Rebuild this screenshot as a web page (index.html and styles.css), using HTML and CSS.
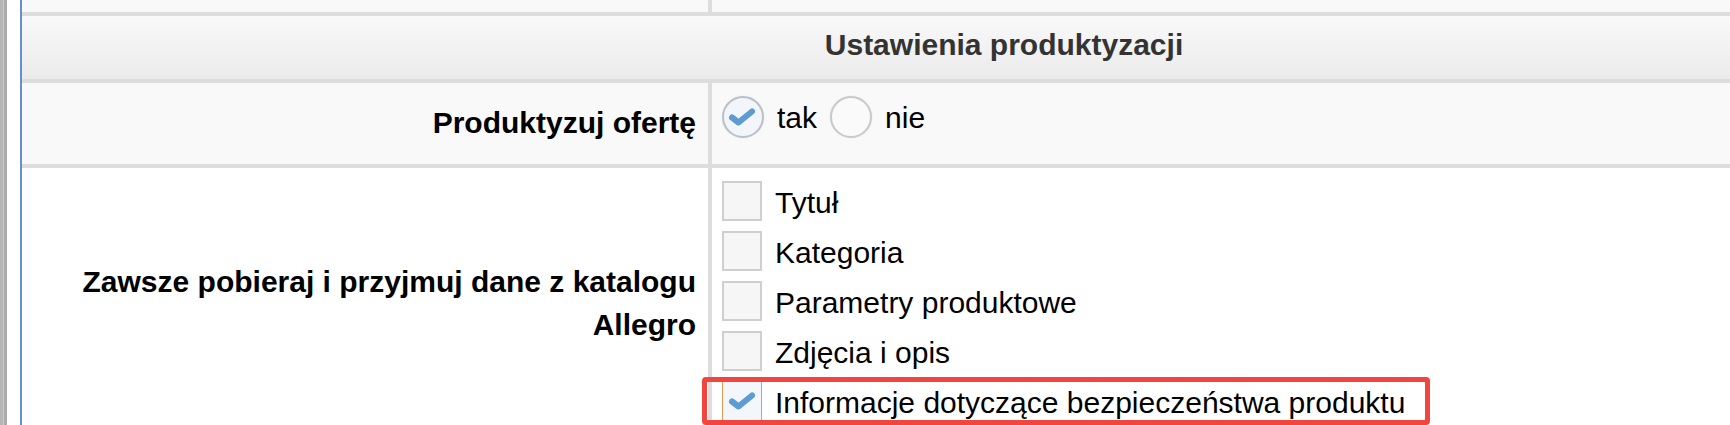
FILE: index.html
```html
<!DOCTYPE html>
<html lang="pl">
<head>
  <meta charset="UTF-8">
  <title>Ustawienia produktyzacji</title>
  <link rel="stylesheet" href="styles.css">
</head>
<body>
  <div class="page">
    <div class="scroll-strip"></div>
    <div class="frame">
      <div class="settings">
        <!-- poprzedni wiersz (ucięty) -->
        <div class="cell label prev"></div>
        <div class="cell field prev"></div>

        <div class="cell section-head">Ustawienia produktyzacji</div>

        <div class="cell label alt">Produktyzuj ofertę</div>
        <div class="cell field alt">
          <div class="radios">
            <label class="radio-opt">
              <span class="radio checked">
                <svg width="28" height="18" viewBox="0 0 28 18"><polyline points="4,9.5 10.5,14.5 24,3.5" fill="none" stroke="#5d9cd3" stroke-width="6" stroke-linecap="round" stroke-linejoin="round"/></svg>
              </span>
              <span class="opt-text">tak</span>
            </label>
            <label class="radio-opt">
              <span class="radio"></span>
              <span class="opt-text">nie</span>
            </label>
          </div>
        </div>

        <div class="cell label">Zawsze pobieraj i przyjmuj dane z katalogu Allegro</div>
        <div class="cell field list">
          <label class="option"><span class="box"></span><span class="opt-text">Tytuł</span></label>
          <label class="option"><span class="box"></span><span class="opt-text">Kategoria</span></label>
          <label class="option"><span class="box"></span><span class="opt-text">Parametry produktowe</span></label>
          <label class="option"><span class="box"></span><span class="opt-text">Zdjęcia i opis</span></label>
          <label class="option marked">
            <span class="box checked">
              <svg width="28" height="18" viewBox="0 0 28 18"><polyline points="4,9.5 10.5,14.5 24,3.5" fill="none" stroke="#5d9cd3" stroke-width="6" stroke-linecap="round" stroke-linejoin="round"/></svg>
            </span>
            <span class="opt-text">Informacje dotyczące bezpieczeństwa produktu</span>
          </label>
        </div>
      </div>
    </div>
  </div>
</body>
</html>
```

FILE: styles.css
```css
html, body {
  margin: 0;
  padding: 0;
  background: #ffffff;
  overflow: hidden;
}
body {
  font-family: "Liberation Sans", Arial, sans-serif;
  font-size: 30px;
  line-height: 1.428571;
  color: #000;
}
.page {
  display: flex;
  height: 425px;
  overflow: hidden;
}
.scroll-strip {
  width: 7px;
  flex: none;
  background: linear-gradient(to right, #b6b6b6 0 3px, #cacaca 3px 4px, #a9a9a9 4px 7px);
}
.frame {
  margin-left: 13px;
  border-left: 2px solid #6190d4;
  flex: 1;
  min-width: 0;
  overflow: hidden;
}
.settings {
  width: 1964px;
  display: grid;
  grid-template-columns: 690px 1fr;
}
.cell {
  box-sizing: border-box;
  border-bottom: 4px solid #dddddd;
  background: #ffffff;
}
.cell.prev {
  height: 16px;
  background: #f9f9f9;
}
.label {
  border-right: 4px solid #dddddd;
  padding: 0 12px 0 15px;
  font-weight: bold;
  text-align: right;
  display: flex;
  align-items: center;
  justify-content: flex-end;
}
.section-head {
  grid-column: 1 / -1;
  height: 67px;
  padding-bottom: 4px;
  background: linear-gradient(#f9f9f9, #ebebeb);
  color: #333;
  font-weight: bold;
  display: flex;
  align-items: center;
  justify-content: center;
}
.alt {
  background: #f9f9f9;
  height: 85px;
}
.field {
  padding-left: 10px;
}
.field.alt {
  padding-top: 13px;
}
.radios {
  display: flex;
  align-items: center;
  gap: 13px;
}
.radio-opt {
  display: flex;
  align-items: center;
  gap: 13px;
  height: 42px;
}
.radio {
  width: 42px;
  height: 42px;
  box-sizing: border-box;
  border: 2px solid #c9c9c9;
  border-radius: 50%;
  background: #fafafa;
  box-shadow: 0 0 2px rgba(0, 0, 0, 0.08);
  display: flex;
  align-items: center;
  justify-content: center;
}
.radio.checked {
  border-color: #b8c0c8;
  background: #f2f5f9;
}
.radio svg {
  margin-left: -2px;
}
.opt-text {
  padding-top: 2px;
}
.list {
  padding-top: 13px;
  padding-bottom: 19px;
  display: flex;
  flex-direction: column;
  gap: 10px;
}
.option {
  display: flex;
  align-items: center;
  gap: 13px;
  height: 40px;
}
.option .opt-text {
  padding-top: 4px;
}
.box {
  width: 40px;
  height: 40px;
  box-sizing: border-box;
  border: 2px solid #cfcfcf;
  background: #f6f6f6;
  display: flex;
  align-items: center;
  justify-content: center;
}
.box.checked {
  border: 1px solid #e59a55;
  background: #f3f6fa;
}
.option.marked {
  position: relative;
}
.option.marked::after {
  content: "";
  position: absolute;
  left: -20px;
  top: -4px;
  width: 728px;
  height: 48px;
  box-sizing: border-box;
  border: 5px solid #f2453d;
  border-radius: 4px;
}
```
